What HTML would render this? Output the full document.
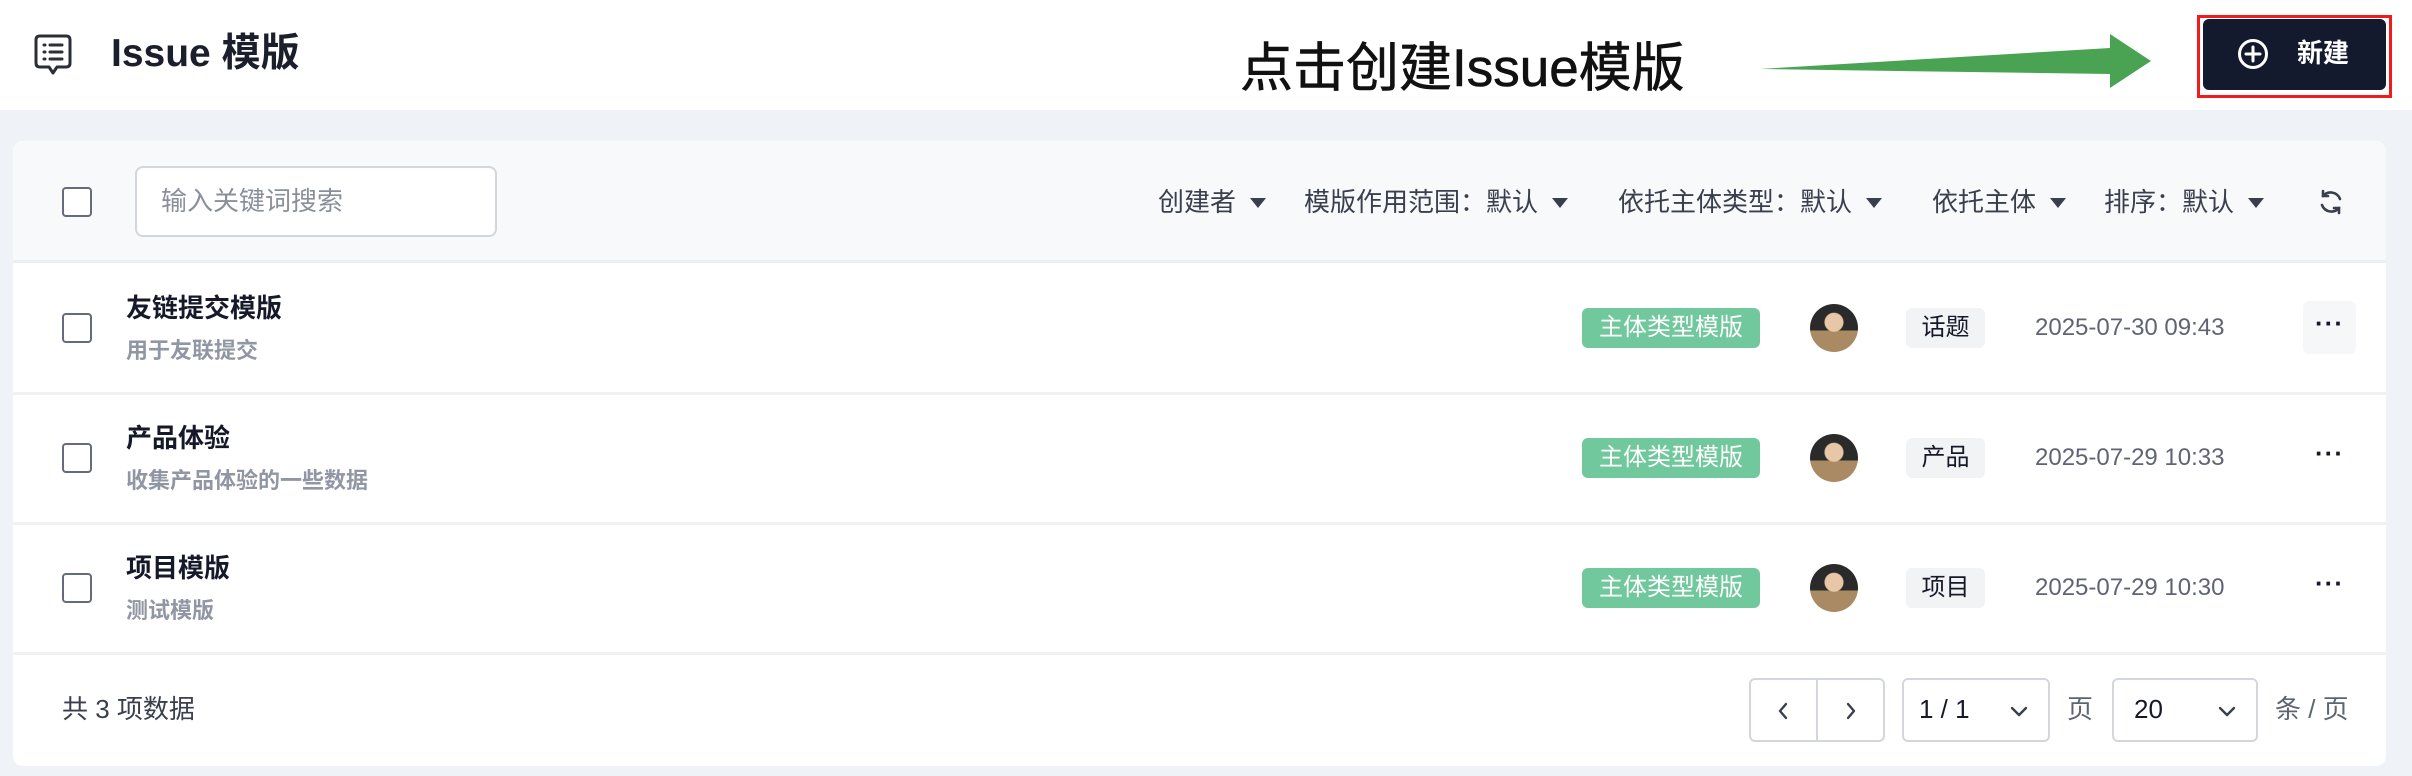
<!DOCTYPE html>
<html><head><meta charset="utf-8"><style>
*{box-sizing:border-box;margin:0;padding:0}
body{width:2412px;height:776px;background:#eff2f6;font-family:"Liberation Sans","Noto Sans CJK SC",sans-serif;position:relative;overflow:hidden}
.a{position:absolute}
.hdr{left:0;top:0;width:2412px;height:110px;background:#fff}
.card{left:13px;top:141px;width:2373px;height:625px;background:#fff;border-radius:10px;overflow:hidden}
.tb{left:0;top:0;width:100%;height:122px;background:#f8f9fb;border-bottom:3px solid #eceef2}
.cb{width:30px;height:30px;border:2px solid #656b7a;border-radius:4px;background:#fff}
.sep{left:0;width:100%;height:3px;background:#eff1f4}
.flt{top:45px;font-size:26px;color:#3a3f4d;line-height:32px;white-space:nowrap}
.tri{display:inline-block;width:0;height:0;border-left:8px solid transparent;border-right:8px solid transparent;border-top:10px solid #3a3f4d;margin-left:14px;vertical-align:3px}
.ttl{font-size:26px;font-weight:bold;color:#16192a;line-height:30px}
.sub{font-size:22px;font-weight:bold;color:#9096a3;line-height:26px}
.tag{width:178px;height:40px;background:#72c89d;border-radius:6px;color:#fff;font-size:24px;line-height:40px;text-align:center}
.av{width:48px;height:48px;border-radius:50%;background:radial-gradient(circle at 50% 38%,#e8c7a6 0 9px,transparent 10px),linear-gradient(#2a2a2a 0 55%,#a98a62 55%);overflow:hidden}
.et{width:79px;height:40px;background:#f2f3f5;border-radius:6px;font-size:24px;line-height:40px;text-align:center;color:#16192a}
.dt{font-size:24px;color:#5f6475;line-height:40px}
.more{width:53px;height:53px;border-radius:6px;text-align:center;font-size:26px;line-height:44px;color:#16192a;font-weight:bold;letter-spacing:1px}
.box{border:2px solid #d3d6dc;border-radius:6px;background:#fff}
</style></head><body>
<div class="a hdr"></div>
<svg class="a" style="left:33px;top:33px" width="40" height="46" viewBox="0 0 40 46" fill="none" stroke="#2b2f3a" stroke-width="3" stroke-linejoin="round" stroke-linecap="round"><path d="M7 3H33Q37 3 37 7V30Q37 34 33 34H24L20 40L16 34H7Q3 34 3 30V7Q3 3 7 3Z"/><path d="M11 12h1M17 12h12M11 19h1M17 19h12M11 26h1M17 26h12"/></svg>
<div class="a" style="left:111px;top:31px;font-size:39px;font-weight:bold;color:#1b1f2c;line-height:46px">Issue 模版</div>
<div class="a" style="left:1240px;top:37px;font-size:53px;color:#111;line-height:64px;white-space:nowrap;-webkit-text-stroke:0.6px #111">点击创建Issue模版</div>
<svg class="a" style="left:1750px;top:30px" width="420" height="64" viewBox="1750 30 420 64"><polygon points="1760,69 2110,48 2110,34 2151,61 2110,88 2110,74" fill="#4aa352"/></svg>
<div class="a" style="left:2197px;top:15px;width:195px;height:83px;border:3px solid #f01c1c"></div>
<div class="a" style="left:2203px;top:19px;width:183px;height:71px;background:#141a2e;border-radius:6px"></div>
<svg class="a" style="left:2237px;top:38px" width="32" height="32" viewBox="0 0 32 32" fill="none" stroke="#fff" stroke-width="3" stroke-linecap="round"><circle cx="16" cy="16" r="13.5"/><path d="M16 9v14M9 16h14"/></svg>
<div class="a" style="left:2297px;top:36px;font-size:26px;font-weight:bold;color:#fff;line-height:34px">新建</div>

<div class="a card">
 <div class="a tb"></div>
 <div class="a cb" style="left:49px;top:46px"></div>
 <div class="a box" style="left:122px;top:25px;width:362px;height:71px;border-radius:8px"></div>
 <div class="a" style="left:148px;top:44px;font-size:26px;color:#8a8f9c;line-height:32px">输入关键词搜索</div>
 <div class="a flt" style="left:1145px">创建者<span class="tri"></span></div>
 <div class="a flt" style="left:1291px">模版作用范围：默认<span class="tri"></span></div>
 <div class="a flt" style="left:1605px">依托主体类型：默认<span class="tri"></span></div>
 <div class="a flt" style="left:1919px">依托主体<span class="tri"></span></div>
 <div class="a flt" style="left:2091px">排序：默认<span class="tri"></span></div>
 <svg class="a" style="left:2304px;top:47px" width="28" height="28" viewBox="0 0 28 28" fill="none" stroke="#3a3f4d" stroke-width="2.6" stroke-linecap="round"><path d="M23 11A10 10 0 0 0 6 8M5 17A10 10 0 0 0 22 20"/><path d="M6 3v5h5M22 25v-5h-5"/></svg>

 <div class="a cb" style="left:49px;top:172px"></div>
 <div class="a ttl" style="left:113px;top:152px">友链提交模版</div>
 <div class="a sub" style="left:113px;top:197px">用于友联提交</div>
 <div class="a tag" style="left:1569px;top:167px">主体类型模版</div>
 <div class="a av" style="left:1797px;top:163px"></div>
 <div class="a et" style="left:1893px;top:167px">话题</div>
 <div class="a dt" style="left:2022px;top:167px">2025-07-30 09:43</div>
 <div class="a more" style="left:2290px;top:160px;background:#f6f7f9">···</div>
 <div class="a sep" style="top:251px"></div>

 <div class="a cb" style="left:49px;top:302px"></div>
 <div class="a ttl" style="left:113px;top:282px">产品体验</div>
 <div class="a sub" style="left:113px;top:327px">收集产品体验的一些数据</div>
 <div class="a tag" style="left:1569px;top:297px">主体类型模版</div>
 <div class="a av" style="left:1797px;top:293px"></div>
 <div class="a et" style="left:1893px;top:297px">产品</div>
 <div class="a dt" style="left:2022px;top:297px">2025-07-29 10:33</div>
 <div class="a more" style="left:2290px;top:290px">···</div>
 <div class="a sep" style="top:381px"></div>

 <div class="a cb" style="left:49px;top:432px"></div>
 <div class="a ttl" style="left:113px;top:412px">项目模版</div>
 <div class="a sub" style="left:113px;top:457px">测试模版</div>
 <div class="a tag" style="left:1569px;top:427px">主体类型模版</div>
 <div class="a av" style="left:1797px;top:423px"></div>
 <div class="a et" style="left:1893px;top:427px">项目</div>
 <div class="a dt" style="left:2022px;top:427px">2025-07-29 10:30</div>
 <div class="a more" style="left:2290px;top:420px">···</div>
 <div class="a sep" style="top:511px"></div>

 <div class="a" style="left:49px;top:552px;font-size:26px;color:#3a3f4d;line-height:32px">共 3 项数据</div>
 <div class="a box" style="left:1736px;top:537px;width:136px;height:64px"></div>
 <div class="a" style="left:1803px;top:539px;width:2px;height:60px;background:#d3d6dc"></div>
 <svg class="a" style="left:1758px;top:558px" width="24" height="24" viewBox="0 0 24 24" fill="none" stroke="#3a3f4d" stroke-width="2.4" stroke-linecap="round" stroke-linejoin="round"><path d="M15 5l-6 7 6 7"/></svg>
 <svg class="a" style="left:1826px;top:558px" width="24" height="24" viewBox="0 0 24 24" fill="none" stroke="#3a3f4d" stroke-width="2.4" stroke-linecap="round" stroke-linejoin="round"><path d="M9 5l6 7-6 7"/></svg>
 <div class="a box" style="left:1889px;top:537px;width:148px;height:64px"></div>
 <div class="a" style="left:1906px;top:552px;font-size:26px;color:#16192a;line-height:32px">1 / 1</div>
 <svg class="a" style="left:1994px;top:558px" width="24" height="24" viewBox="0 0 24 24" fill="none" stroke="#3a3f4d" stroke-width="2.4" stroke-linecap="round" stroke-linejoin="round"><path d="M5 9l7 7 7-7"/></svg>
 <div class="a" style="left:2054px;top:552px;font-size:26px;color:#5f6475;line-height:32px">页</div>
 <div class="a box" style="left:2099px;top:537px;width:146px;height:64px"></div>
 <div class="a" style="left:2121px;top:552px;font-size:26px;color:#16192a;line-height:32px">20</div>
 <svg class="a" style="left:2202px;top:558px" width="24" height="24" viewBox="0 0 24 24" fill="none" stroke="#3a3f4d" stroke-width="2.4" stroke-linecap="round" stroke-linejoin="round"><path d="M5 9l7 7 7-7"/></svg>
 <div class="a" style="left:2262px;top:552px;font-size:26px;color:#5f6475;line-height:32px;white-space:nowrap">条 / 页</div>
</div>
</body></html>
